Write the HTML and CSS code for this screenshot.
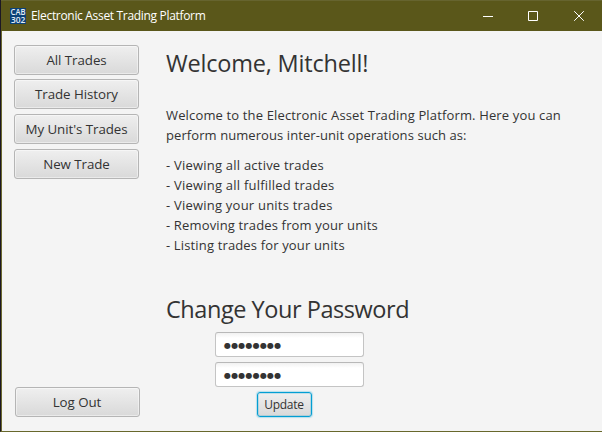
FILE: index.html
```html
<!DOCTYPE html>
<html lang="en">
<head>
<meta charset="utf-8">
<title>Electronic Asset Trading Platform</title>
<link rel="stylesheet" href="styles.css">
</head>
<body>
<div class="window">
  <header class="titlebar">
    <svg class="app-icon" width="16" height="16" viewBox="0 0 16 16">
      <rect width="16" height="16" fill="#0c4278"/>
      <text x="0.6" y="7.2" textLength="14.8" lengthAdjust="spacingAndGlyphs">CAB</text>
      <text x="1" y="14.8" textLength="14.4" lengthAdjust="spacingAndGlyphs">302</text>
    </svg>
    <div class="app-title">Electronic Asset Trading Platform</div>
    <div class="controls">
      <svg width="10" height="10" viewBox="0 0 10 10"><path d="M0 5.5H10"/></svg>
      <svg width="10" height="10" viewBox="0 0 10 10"><path d="M.5 .5H9.5V9.5H.5Z"/></svg>
      <svg class="close" width="10" height="10" viewBox="0 0 10 10"><path d="M.2 .2L9.8 9.8M9.8 .2L.2 9.8"/></svg>
    </div>
  </header>
  <div class="body">
    <nav class="sidebar">
      <button class="btn all">All Trades</button>
      <button class="btn history">Trade History</button>
      <button class="btn unit">My Unit's Trades</button>
      <button class="btn new">New Trade</button>
      <button class="btn logout">Log Out</button>
    </nav>
    <main class="content">
      <h1 class="welcome">Welcome, Mitchell!</h1>
      <p class="intro"><span class="line-a">Welcome to the Electronic Asset Trading Platform. Here you can</span><br><span class="line-b">perform numerous inter-unit operations such as:</span></p>
      <div class="list">
        <div>- Viewing all active trades</div>
        <div>- Viewing all fulfilled trades</div>
        <div>- Viewing your units trades</div>
        <div class="tight">- Removing trades from your units</div>
        <div class="tight">- Listing trades for your units</div>
      </div>
      <h2 class="change">Change Your Password</h2>
      <form class="form">
        <div class="field">●●●●●●●●</div>
        <div class="field">●●●●●●●●</div>
        <button type="button" class="update">Update</button>
      </form>
    </main>
  </div>
</div>
</body>
</html>
```
FILE: styles.css
```css
* { box-sizing: border-box; }
body {
  margin: 0;
  font-family: "Open Sans", "Noto Sans", sans-serif;
  font-size: 13px;
  color: #333;
}
.window {
  width: 602px;
  height: 432px;
  display: flex;
  flex-direction: column;
  overflow: hidden;
  background: #f4f4f4;
  border-left: 1px solid #1c1724;
  border-bottom: 1px solid #68682c;
}
.titlebar {
  height: 31px;
  flex: none;
  display: flex;
  align-items: center;
  padding-left: 9px;
  background: #5a571a;
  border-top: 1px solid #66642f;
  color: #fff;
}
.app-icon { flex: none; }
.app-icon text {
  fill: #e6eef5;
  font-size: 8px;
  font-weight: 600;
}
.app-title {
  margin-left: 5px;
  font-size: 12px;
  line-height: 16px;
  letter-spacing: -0.32px;
  white-space: nowrap;
}
.controls {
  margin-left: auto;
  margin-right: 18px;
  display: flex;
  gap: 35px;
}
.controls svg { fill: none; stroke: #fff; stroke-width: 1; }
.controls .close { margin-left: 1px; }
.body {
  flex: 1;
  display: flex;
  border-left: 1px solid #6a682f;
}
.sidebar {
  width: 138px;
  padding: 14px 0 14px 12px;
  display: flex;
  flex-direction: column;
}
.btn, .update {
  font-family: inherit;
  color: #333;
  padding: 0;
  border: 1px solid #b5b5b5;
  border-radius: 3px;
  background: linear-gradient(#efefef, #d9d9d9);
  box-shadow: inset 0 0 0 1px rgba(255, 255, 255, .45);
  white-space: nowrap;
}
.btn {
  width: 125px;
  height: 30px;
  flex: none;
  font-size: 13.33px;
  line-height: 28px;
  letter-spacing: -0.06px;
}
.history { margin-top: 4px; }
.unit, .new { margin-top: 5px; }
.logout { margin-top: auto; margin-left: 1px; padding-right: 1px; }
.content {
  flex: 1;
  padding: 15px 0 0 26px;
  white-space: nowrap;
}
h1, h2 {
  margin: 0;
  font-size: 23.5px;
  font-weight: 400;
  line-height: 34px;
}
h1 { letter-spacing: -0.2px; }
h2 { letter-spacing: -0.45px; }
.intro { margin: 25px 0 0; line-height: 20px; }
.line-a { letter-spacing: 0.15px; }
.line-b { letter-spacing: 0.08px; }
.list { margin-top: 10px; line-height: 20px; letter-spacing: 0.22px; }
.tight { letter-spacing: 0.15px; }
.change { margin-top: 37px; }
.form {
  width: 247px;
  margin-top: 6px;
  display: flex;
  flex-direction: column;
  align-items: center;
  gap: 5px;
}
.field {
  width: 149px;
  height: 25px;
  padding-left: 8px;
  border: 1px solid #c4c4c4;
  border-top-color: #b8b8b8;
  border-radius: 3px;
  background: linear-gradient(#f1f1f1, #fff 5px);
  font-family: "DejaVu Sans", sans-serif;
  font-size: 8px;
  letter-spacing: 0.2px;
  line-height: 25px;
}
.update {
  width: 55px;
  height: 25px;
  margin-right: 11px;
  font-size: 12px;
  line-height: 23px;
  letter-spacing: -0.3px;
  border-color: #039ed3;
  box-shadow: 0 0 1px 1px rgba(3, 158, 211, .25), inset 0 0 0 1px rgba(3, 158, 211, .2);
}
```
